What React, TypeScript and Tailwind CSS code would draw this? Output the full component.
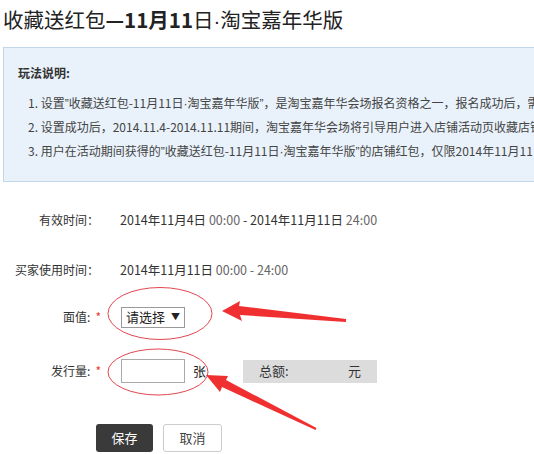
import React from 'react'

const FONT = { fontFamily: '"Noto Sans CJK SC", "Liberation Sans", sans-serif' }
const LATIN = { fontFamily: '"Liberation Sans", sans-serif' }

// narrow latin glyphs for quotes and the middle dot, as in the original page
const Q = () => <span style={LATIN}>”</span>
const Dot = () => <span style={LATIN}>·</span>

function Label({ text, required }: { text: string; required?: boolean }) {
    return (
        <div className="w-[101px] flex justify-end text-[12px] text-[#333]">
            {required ? (
                <>
                    <span>{text}</span>
                    <span className="text-[#e33] ml-[5px]">*</span>
                </>
            ) : (
                <span className="pr-[2px]">{text}</span>
            )}
        </div>
    )
}

// red annotation marks drawn over the form
function Marks() {
    return (
        <svg className="absolute left-0 top-0 pointer-events-none" width="534" height="454">
            <ellipse cx="160" cy="313.5" rx="52" ry="26" fill="none" stroke="#e2474f" strokeWidth="1" />
            <ellipse cx="158" cy="372" rx="50" ry="23" fill="none" stroke="#e2474f" strokeWidth="1" />
            <polygon
                points="222,311 240,301 239,306 346,319 346,322 240,315 242,321"
                fill="#f03030"
            />
            <polygon
                points="206,375 228,376 226,380 316.5,428 315.5,430 222,387 220,392"
                fill="#f03030"
            />
        </svg>
    )
}

export default function App() {
    return (
        <div className="relative w-[534px] h-[454px] bg-white overflow-hidden" style={FONT}>
            <h1 className="h-[39px] leading-[39px] pl-[3px] text-[20.5px] text-[#222] whitespace-nowrap">
                收藏送红包<span className="font-bold">—11月11</span>日<Dot />淘宝嘉年华版
            </h1>

            {/* rules box */}
            <div className="mt-[8px] ml-[3px] w-[600px] border border-[#c2d6ea] bg-[#e9f2fb] pt-[15px] pb-[18px] pl-[14px]">
                <div className="h-[20px] leading-[20px] text-[12px] font-bold text-[#333]">玩法说明:</div>
                <ul className="mt-[8px] pl-[10px] text-[12px] text-[#444]">
                    <li className="h-[24px] leading-[24px] whitespace-nowrap">
                        1. 设置<Q />收藏送红包-11月11日<Dot />淘宝嘉年华版<Q />，是淘宝嘉年华会场报名资格之一，报名成功后，需在活动期间保持设置
                    </li>
                    <li className="h-[24px] leading-[24px] whitespace-nowrap">
                        2. 设置成功后，2014.11.4-2014.11.11期间，淘宝嘉年华会场将引导用户进入店铺活动页收藏店铺领取红包
                    </li>
                    <li className="h-[24px] leading-[24px] whitespace-nowrap">
                        3. 用户在活动期间获得的<Q />收藏送红包-11月11日<Dot />淘宝嘉年华版<Q />的店铺红包，仅限2014年11月11日当天使用
                    </li>
                </ul>
            </div>

            {/* form */}
            <div className="flex flex-col">
                <div className="mt-[28px] h-[20px] flex items-center">
                    <Label text="有效时间：" />
                    <div className="ml-[19px] text-[12.5px] text-[#333] whitespace-nowrap">
                        2014年11月4日 <span className="text-[#666]">00:00</span> - 2014年11月11日 <span className="text-[#666]">24:00</span>
                    </div>
                </div>
                <div className="mt-[30px] h-[20px] flex items-center">
                    <Label text="买家使用时间：" />
                    <div className="ml-[19px] text-[12.5px] text-[#333] whitespace-nowrap">
                        2014年11月11日 <span className="text-[#666]">00:00 - 24:00</span>
                    </div>
                </div>
                <div className="mt-[26px] h-[22px] flex items-center">
                    <Label text="面值:" required />
                    <div className="ml-[20px] w-[64px] h-[21px] border border-[#999] bg-white flex items-center justify-between px-[4px] text-[13px] text-[#222]">
                        <span>请选择</span>
                        <span className="text-[9px]">▼</span>
                    </div>
                </div>
                <div className="mt-[31px] h-[24px] flex items-center">
                    <Label text="发行量:" required />
                    <div className="ml-[20px] w-[64px] h-[24px] border border-[#aaa] bg-white" />
                    <span className="ml-[8px] text-[13px] text-[#222]">张</span>
                    <div className="ml-[37px] w-[134px] h-[23px] bg-[#dcdcdc] flex items-center justify-between pl-[16px] pr-[16px] text-[13px] text-[#333]">
                        <span>总额:</span>
                        <span>元</span>
                    </div>
                </div>
                <div className="mt-[41px] ml-[96px] flex gap-[10px]">
                    <button className="w-[57px] h-[28px] rounded-[3px] bg-[#3a3a3a] text-white text-[13px]">保存</button>
                    <button className="w-[59px] h-[28px] rounded-[3px] border border-[#ccc] bg-white text-[#444] text-[13px]">取消</button>
                </div>
            </div>

            <Marks />
        </div>
    )
}
